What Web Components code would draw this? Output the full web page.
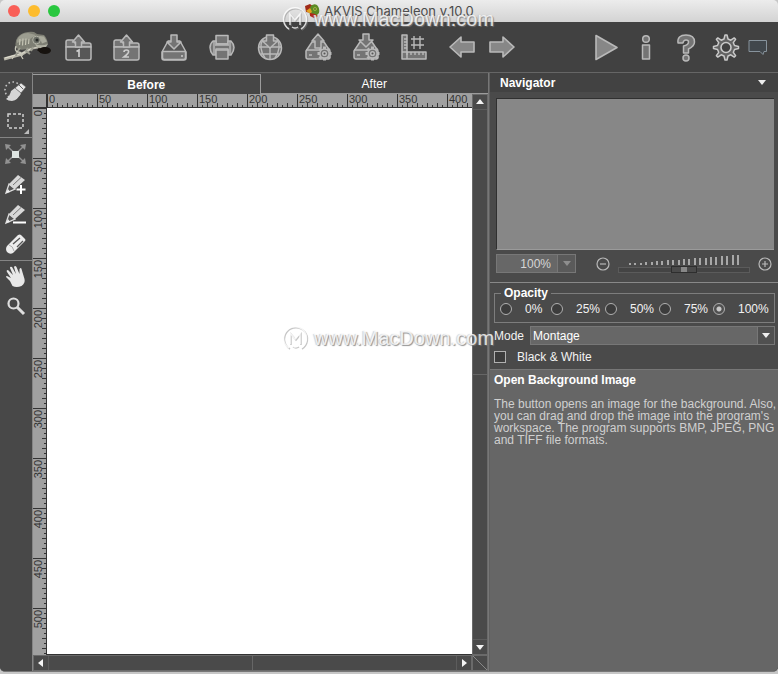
<!DOCTYPE html>
<html lang="en">
<head>
<meta charset="utf-8">
<title>AKVIS Chameleon v.10.0</title>
<style>
html,body{margin:0;height:100%}
body{background:#c6c6c6;font:12px/14px "Liberation Sans",Arial,sans-serif;color:#f2f2f2}
</style>
</head>
<body>
<chameleon-app></chameleon-app>
<script>
const ICONS={
open1:`<path class="m" d="M2 14V9q0-2 2-2h5l2 3h14q2 0 2 2v2z"/><path class="d" d="M2 14h25v11q0 2-2 2H4q-2 0-2-2z"/><path class="m" d="M14.500 2l6 7h-3v5h-6V9h-3z"/><path class="w" d="M12.500 18.500l2.500-1.500v7"/>`,
open2:`<path class="m" d="M2 14V9q0-2 2-2h5l2 3h14q2 0 2 2v2z"/><path class="m" d="M2 14h25v11q0 2-2 2H4q-2 0-2-2z"/><path class="m" d="M14.500 2l6 7h-3v5h-6V9h-3z"/><path class="w" d="M12 19q0-2 2.500-2t2 2q0 1.500-4.500 5h5"/>`,
save:`<path class="d" d="M8 8L2 19v6q0 2 2 2h20q2 0 2-2v-6L20 8z"/><path class="m" d="M2.500 18.500h23v6q0 2-2 2h-19q-2 0-2-2z"/><path class="m" d="M11 2h6v7h4l-7 7-7-7h4z"/><path class="w" d="M21 23h2"/>`,
print:`<path class="m" d="M8 2.500h12V11H8z"/><path class="m" d="M5 8h3v3h12V8h3q3 3 3 6.500T23 22h-3v-6H8v6H5q-3-3.500-3-7.500T5 8z"/><path class="m" d="M8 17h12v9H8z"/><path class="l" d="M6 8v14M22 8v14M7 12h14"/>`,
web:`<circle class="m" cx="14" cy="15" r="11.500"/><path class="l" d="M14 4v22M3 14h22M5 21h18M7 6q-5 9 2 19M21 6q5 9-2 19"/><path class="m" d="M10.500 2h7v6h4L14 15 6.500 8h4z"/>`,
load:`<path class="m" d="M8 9L2 18v6q0 2 2 2h20q2 0 2-2v-6L20 9z"/><path class="l" d="M2 17h24M5 22h3"/><path class="m" d="M11 15V8H8l6-7 6 7h-3v7z"/>`,
store:`<path class="m" d="M8 9L2 18v6q0 2 2 2h20q2 0 2-2v-6L20 9z"/><path class="l" d="M2 17h24M5 22h3"/><path class="m" d="M11 1h6v6h4l-7 7-7-7h4z"/>`,
cog:`<g transform="translate(20.500 20.500)"><path class="s" d="M-1.500-7h3v14h-3zM-7-1.500H7v3H-7zM-6-4L-4-6 6 4 4 6zM-6 4L4-6 6-4-4 6z"/><circle class="m" r="4.600"/><circle class="d" r="1.800"/></g>`,
ruler:`<path class="m" d="M2 2h5v24H2zM2 19h24v7H2z"/><path class="l" d="M4 6h3M4 9h3M4 12h3M4 15h3M7 19v3M11 19v3M15 19v3M19 19v3M23 19v3M14 3v13M20 3v13M11 6h13M11 12h13"/>`,
prev:`<path class="f" d="M2 14L13 4v5h13v10H13v5z"/>`,
next:`<path class="f" d="M26 14L15 4v5H2v10h13v5z"/>`,
play:`<path class="f" d="M4 2.500L25 14.500 4 26.500z"/>`,
info:`<circle class="m" cx="14" cy="6" r="3.300"/><path class="m" d="M10.500 12h7v14h-7z"/>`,
help:`<path class="m" d="M6 10q-1-8 8-8 8.500 0 8.500 7 0 4-6 7v4h-5v-7q5-1 5-4 0-2-2.500-2T11 10z"/><circle class="m" cx="14" cy="25" r="3"/>`,
gear:`<g transform="translate(14 14.500)"><path class="g" d="M-2-8.500L-1-12.500H1L2-8.500 4.800-7.300 8.200-9.600 9.600-8.200 7.300-4.800 8.500-2 12.500-1V1L8.500 2 7.300 4.800 9.600 8.200 8.200 9.600 4.800 7.300 2 8.500 1 12.500H-1L-2 8.500-4.800 7.300-8.200 9.600-9.600 8.200-7.300 4.800-8.500 2-12.500 1V-1L-8.500-2-7.300-4.800-9.600-8.200-8.200-9.600-4.800-7.300z"/><circle r="5" class="h"/></g>`,
chat:`<path d="M5 7.500h17.500v11H20l-1 3-3-3H5z" fill="#41474c" stroke="#87939c"/>`,
history:`<circle cx="12" cy="13" r="8" fill="none" stroke="#c4c4c4" stroke-width="1.600" stroke-dasharray="1.600 2.500"/><path d="M5 22q4-3 5-8l4-3 6 5q-3 7-9 8-4 0-6-2z" fill="#d6d6d6"/><path d="M14 11l6-5 5 4-5 6z" fill="#e6e6e6" stroke="#555" stroke-width=".6"/><path d="M18 8l4 4" stroke="#666"/>`,
marquee:`<path d="M7 7h15v14H7z" fill="none" stroke="#d0d0d0" stroke-width="1.500" stroke-dasharray="3 2"/>`,
transform:`<path d="M6 6l17 16M23 6L6 22" stroke="#909090" stroke-width="1.500"/><path d="M4 4l6 1-5 5zM25 4l-6 1 5 5zM4 24l6-1-5-5zM25 24l-6-1 5-5z" fill="#929292"/><path d="M11 11h7v7h-7z" fill="#dfe5e2"/>`,
pencil:`<path d="M5 23l3-9 6 5z" fill="#555" stroke="#ddd" stroke-width="1.300"/><path d="M8 14l9-9 7 5-10 9z" fill="#d8d8d8"/><path d="M12 15l8-7.500" stroke="#777"/><path d="M5 23l2-4 2 3z" fill="#eee"/>`,
plus:`<path d="M20 15v9M15.500 19.500h9" stroke="#fff" stroke-width="2"/>`,
minus:`<path d="M12 22.500h13" stroke="#fff" stroke-width="2"/>`,
eraser:`<path d="M6 16L17 5q2-1 3 0l4 4q1 1 0 2L12 23q-3 2-6-1-2-3 0-6z" fill="#ececec"/><path d="M12 14l7-6M16 17l6-6" stroke="#555" stroke-width="1.300"/><path d="M8 15q4 1 5 6" stroke="#aaa" fill="none"/>`,
hand:`<g transform="translate(0 -1)"><path d="M11 24q-1-4-5-7-2-2 0-2l4 2-4-6q-1-2 1-2l5 5-3-7q0-2 2-1l4 7-2-7q1-2 2.500 0l3 7 0-5q1.500-2 2 0l3 10q1 4-3 7-5 2-9 0z" fill="#e8e8e8"/></g>`,
zoom:`<circle cx="12.500" cy="11.500" r="5" fill="none" stroke="#dedede" stroke-width="2.200"/><path d="M16 15l7 7" stroke="#dedede" stroke-width="3"/>`
};
const define=(name,markup,setup)=>{
  const t=document.createElement('template');
  t.innerHTML=markup;
  customElements.define(name,class extends HTMLElement{
    constructor(){super();this.attachShadow({mode:'open'}).append(t.content.cloneNode(true))}
    connectedCallback(){if(setup&&!this.ready){this.ready=true;setup(this,this.shadowRoot)}}
  });
};

define('line-icon',`<style>
:host{display:block;width:28px;height:28px}
svg{display:block;width:28px;height:28px;overflow:visible}
.m{fill:#747474;stroke:#b9b9b9;stroke-width:1.500;stroke-linejoin:round}
.f{fill:#878787;stroke:#b9b9b9;stroke-width:1.600;stroke-linejoin:round}
.d{fill:#575757;stroke:#b9b9b9;stroke-width:1.500;stroke-linejoin:round}
.l{fill:none;stroke:#b9b9b9;stroke-width:1.400}
.w{fill:none;stroke:#ccc;stroke-width:1.700}
.s{fill:#b9b9b9}
.g{fill:#636363;stroke:#c9c9c9;stroke-width:1.500;stroke-linejoin:round}
.h{fill:#414141;stroke:#c9c9c9;stroke-width:1.600}
</style><svg viewBox="0 0 28 28" aria-hidden="true"></svg>`,(el,r)=>{
  r.querySelector('svg').innerHTML=el.getAttribute('name').split(' ').map(n=>ICONS[n]).join('');
});

define('tool-button',`<style>
:host{display:block;width:48px}
button{display:flex;align-items:center;justify-content:center;width:100%;height:100%;padding:0;border:0;background:none}
</style><button type="button"></button>`,(el,r)=>{
  const b=r.querySelector('button'),n=document.createElement('line-icon');
  n.setAttribute('name',el.getAttribute('icon'));
  b.setAttribute('aria-label',el.getAttribute('label'));
  b.append(n);
});

define('title-bar',`<style>
:host{display:flex;align-items:center;height:22px;background:linear-gradient(#ececec,#d3d3d3);color:#4b4b4b;font:13px/16px Inter,"Liberation Sans",sans-serif}
.side{flex:1;display:flex;gap:8px;padding:0 8px}
button{width:12px;height:12px;padding:0;border:0;border-radius:50%}
.c{background:#f95f57}.n{background:#fdbc2e}.z{background:#29c73f}
.name{display:flex;align-items:center;gap:4px}
svg{width:16px;height:16px}
</style>
<div class="side"><button class="c" aria-label="Close"></button><button class="n" aria-label="Minimize"></button><button class="z" aria-label="Zoom"></button></div>
<div class="name"><svg viewBox="0 0 16 16" aria-hidden="true"><path d="M1 3l5-2 4 3-3 6-5-1z" fill="#a02a18"/><path d="M2 8l4-3 3 2-2 4z" fill="#e2a31e"/><path d="M6 4q3-4 7-2 3 3 2 8l-4 4-6-3 3-2z" fill="#5c8a24"/><path d="M6 10l5 1 3 2-4 2-4-2z" fill="#b3261c"/><circle cx="11" cy="6" r="1.800" fill="#b8d04a"/><circle cx="11" cy="6" r=".8" fill="#222"/></svg><span>AKVIS Chameleon v.10.0</span></div><div class="side"></div>`);

define('chameleon-logo',`<style>:host{display:block;width:50px;height:36px}svg{display:block;width:50px;height:36px}</style>
<svg viewBox="0 0 50 36" role="img" aria-label="Chameleon">
<path d="M2 30l18-5 10-6 11-2" fill="none" stroke="#b9b7aa" stroke-width="3"/><path d="M3 29l18-5 9-5 9-2" fill="none" stroke="#e1dfd2"/>
<path d="M14 19q-2-9 4-13 6-4 14-3l3 2 7 1q3 3 4 9-5 4-12 3l-9 2q-7 2-11-1z" fill="#7e7f74"/>
<path d="M15 11q3-7 11-7l8 2-6 4q-7 1-13 4z" fill="#9c9d90"/>
<path d="M18 10l-.5 6M21 9.500l-.5 7M24 9.500l-.5 6.500M27 10l-.5 5" stroke="#c4c4b4" stroke-width="1.200"/>
<path d="M33 15q6 2.500 13 0l-2 3-9 .5z" fill="#b0b1a3"/><path d="M37 7l5 .5 3 5-5 2z" fill="#a9aa9c"/>
<circle cx="34.500" cy="11" r="3.800" fill="#6b6e66" stroke="#b2b3a6"/><circle cx="35" cy="11" r="1.500" fill="#282b28"/>
<path d="M18 19l-3 4-1 4M26 19l-2 3 4 3M31 18l-2 4" fill="none" stroke="#9b9c90" stroke-width="2"/>
<path d="M14 17q-2 5 2 6 4 0 4 4" fill="none" stroke="#c9c8bb" stroke-width="1.300"/>
<path d="M12 27l-2 3M18 25l3 5" stroke="#c9c7b8" stroke-width="1.300"/>
<ellipse cx="43" cy="21.500" rx="6" ry="3.500" fill="#17130f"/><path d="M36 20l4 3" stroke="#17130f" stroke-width="3"/></svg>`);

define('main-toolbar',`<style>
:host{display:flex;align-items:stretch;height:50px;padding:0 8px 0 2px;background:#414141;border-bottom:1px solid #666}
chameleon-logo{align-self:center;margin-right:2px}
.nav{margin-left:4px;display:flex}
.right{margin-left:auto;display:flex}
.nav tool-button,.right tool-button{width:40px}
.right tool-button:last-child{width:24px}
</style><chameleon-logo></chameleon-logo>
<tool-button icon="open1" label="Open Background Image"></tool-button><tool-button icon="open2" label="Open Foreground Image"></tool-button><tool-button icon="save" label="Save Image"></tool-button><tool-button icon="print" label="Print"></tool-button><tool-button icon="web" label="Publish"></tool-button><tool-button icon="load cog" label="Load Strokes"></tool-button><tool-button icon="store cog" label="Save Strokes"></tool-button><tool-button icon="ruler" label="Rulers and Grid"></tool-button>
<div class="nav"><tool-button icon="prev" label="Undo"></tool-button><tool-button icon="next" label="Redo"></tool-button></div>
<div class="right"><tool-button icon="play" label="Run"></tool-button><tool-button icon="info" label="About"></tool-button><tool-button icon="help" label="Help"></tool-button><tool-button icon="gear" label="Preferences"></tool-button><tool-button icon="chat" label="Notifications"></tool-button></div>`);

define('tool-palette',`<style>
:host{display:block;width:32px;background:#484848;border-right:1px solid #858585;box-sizing:content-box}
.group{display:flex;flex-direction:column;border-bottom:1px solid #858585;padding:1px 0}
.group:last-of-type{border:0;padding:0}
tool-button{width:30px;height:30px}
.group:first-of-type{padding:3px 0 1px;position:relative}
.corner{position:absolute;right:3px;bottom:3px;width:5px;height:5px;fill:#bbb}
</style>
<div class="group"><tool-button icon="history" label="History Brush"></tool-button><tool-button icon="marquee" label="Selection"></tool-button><svg class="corner" viewBox="0 0 5 5" aria-hidden="true"><path d="M5 0v5H0z"/></svg></div>
<div class="group"><tool-button icon="transform" label="Transform"></tool-button><tool-button icon="pencil plus" label="Keep Pencil"></tool-button><tool-button icon="pencil minus" label="Drop Pencil"></tool-button><tool-button icon="eraser" label="Eraser"></tool-button></div>
<div class="group"><tool-button icon="hand" label="Hand"></tool-button><tool-button icon="zoom" label="Zoom"></tool-button></div>`);

define('scale-ruler',`<style>
:host{display:block;overflow:hidden;background:#a0a0a0;min-width:0;min-height:0;position:relative}
svg{position:absolute;left:0;top:0;width:100%;height:100%}
text{font:11px "Liberation Sans",Arial,sans-serif;fill:#333}
path{stroke:#333;fill:none}
</style><svg aria-hidden="true"></svg>`,(el,r)=>{
  const v=el.hasAttribute('vertical'),max=+el.getAttribute('max');
  let d='',t='';
  for(let i=0;i<3000;i+=5){
    const n=i%50===0?0:i%10===0?9:11,p=i+.5;
    d+=v?`M${n} ${p}H14`:`M${p} ${n}V14`;
  }
  for(let i=0;i<=max;i+=50)t+=v?`<text text-anchor="end" transform="translate(9 ${i+2}) rotate(-90)">${i}</text>`:`<text x="${i+2}" y="9">${i}</text>`;
  r.querySelector('svg').innerHTML=`<path d="${d}${v?'M13.500 0V3000':'M0 13.500H3000'}"/>${t}`;
});

define('scroll-bar',`<style>
:host{display:flex;background:#4a4a4a;border:1px solid #6a6a6a;box-sizing:border-box;min-width:0;min-height:0}
:host([vertical]){flex-direction:column}
button{flex:none;width:14px;height:14px;padding:0;border:0;background:none;display:grid;place-items:center}
svg{width:8px;height:8px;fill:#f4f4f4}
:host([vertical]) svg{transform:rotate(90deg)}
.track{flex:1;display:flex;border:solid #5c5c5c;border-width:0 1px}
:host([vertical]) .track{flex-direction:column;border-width:1px 0}
.thumb{flex:0 0 50%;box-sizing:border-box;border:solid #666;border-width:0 1px 0 0}
:host([vertical]) .thumb{border-width:0 0 1px}
</style><button aria-label="Back"><svg viewBox="0 0 8 8"><path d="M6 0L1 4l5 4z"/></svg></button><div class="track"><div class="thumb"></div></div><button aria-label="Forward"><svg viewBox="0 0 8 8"><path d="M2 0l5 4-5 4z"/></svg></button>`);

define('image-workspace',`<style>
:host{display:flex;flex-direction:column;min-width:0;background:#4a4a4a;border-right:1px solid #777;padding-top:1px}
.tabs{display:grid;grid-template-columns:1fr 1fr;height:20px}
.tabs button{border:0;padding:0;background:#464646;color:#fff;font:bold 12px/14px "Liberation Sans",Arial,sans-serif}
.tabs button:first-child{border:solid #9c9c9c;border-width:1px 1px 0 0}
.tabs button:last-child{border-bottom:1px solid #9c9c9c;font-weight:normal}
.view{flex:1;min-height:0;display:grid;grid-template:14px minmax(0,1fr) 16px/14px minmax(0,1fr) 16px}
.corner{background:#a0a0a0;border:solid #333;border-width:0 1px 1px 0}
.canvas{background:#fff;border-bottom:1px solid #333}
.v{grid-area:1/3/3/4}.h{grid-area:3/1/4/3}
.grip{background:linear-gradient(to top right,transparent 47%,#888 47% 53%,transparent 53%);border:1px solid #6a6a6a}
</style>
<div class="tabs" role="tablist"><button role="tab" aria-selected="true">Before</button><button role="tab">After</button></div>
<div class="view"><div class="corner"></div><scale-ruler max="400"></scale-ruler><scroll-bar class="v" vertical></scroll-bar><scale-ruler vertical max="500"></scale-ruler><div class="canvas"></div><scroll-bar class="h"></scroll-bar><div class="grip"></div></div>`);

define('navigator-panel',`<style>
:host{display:block;border-bottom:1px solid #888}
header{display:flex;align-items:center;justify-content:space-between;height:19px;padding:0 11px 0 10px;background:#424242;font-weight:bold;color:#fff}
header button{width:10px;height:10px;padding:0;border:0;background:none;display:grid;place-items:center}
header svg{width:8px;height:5px;fill:#eee}
.preview{height:150px;margin:6px 4px 0 6px;background:#878787;border:1px solid #303030;border-width:1px 0 0 1px;border-bottom:1px solid #9a9a9a}
.row{display:flex;align-items:center;padding:4px 6px 9px}
.pick{position:relative;display:block}
.pick svg,.pick i{position:absolute;pointer-events:none}
.pick i{right:0;top:0;bottom:0;width:17px;border:1px solid #777;display:grid;place-items:center;background:#5a5a5a}
.pick svg{width:8px;height:5px;fill:#8e8e8e}
select{appearance:none;display:block;width:80px;height:19px;padding:0 24px 0 0;border:1px solid #777;border-radius:0;background:#676767;color:#d6d6d6;font:12px/16px "Liberation Sans",Arial,sans-serif;text-align-last:right}
.zoom{width:14px;height:14px;padding:0;border:0;background:none}
.zoom svg{display:block;width:14px;height:14px;fill:none;stroke:#b8b8b8;stroke-width:1.200}
.out{margin-left:20px;margin-right:8px}.in{margin-left:auto}
.slide{flex:0 0 132px}
.slide svg{display:block;width:132px;height:11px}
input{appearance:none;display:block;width:100%;height:6px;margin:1px 0 0;background:#444;border:1px solid #5b5b5b;box-sizing:border-box}
input::-webkit-slider-thumb{appearance:none;width:26px;height:7px;border:1px solid #2e2e2e;background:linear-gradient(90deg,#4a4a4a 9px,#888 9px 15px,#4a4a4a 15px)}
</style>
<header>Navigator<button aria-label="Panel menu"><svg viewBox="0 0 8 5"><path d="M0 0h8L4 5z"/></svg></button></header>
<div class="preview"></div>
<div class="row"><label class="pick"><select aria-label="Zoom"><option>100%</option></select><i><svg viewBox="0 0 8 5"><path d="M0 0h8L4 5z"/></svg></i></label>
<button class="zoom out" aria-label="Zoom out"><svg viewBox="0 0 14 14"><circle cx="7" cy="7" r="6"/><path d="M4 7h6"/></svg></button>
<div class="slide"><svg class="ticks" viewBox="0 0 132 11" aria-hidden="true"><path fill="none" stroke="#a8a8a8" stroke-width="2"/></svg><input type="range" value="50" aria-label="Zoom level"></div>
<button class="zoom in" aria-label="Zoom in"><svg viewBox="0 0 14 14"><circle cx="7" cy="7" r="6"/><path d="M4 7h6M7 4v6"/></svg></button></div>`,(el,r)=>{
  let d='';for(let i=0;i<21;i++)d+=`M${Math.round(12+i*5.4)} 10V${Math.round(8-Math.max(0,i-1)*.42)}`;
  r.querySelector('.ticks path').setAttribute('d',d);
});

define('settings-panel',`<style>
:host{display:block;padding:2px 3px 5px 4px;font-size:12px}
fieldset{display:grid;grid-template-columns:51fr 54fr 54fr 54fr 60fr;margin:0;padding:0 1px 5px 5px;border:1px solid #7d7d7d;min-width:0}
legend{padding:0 3px;margin-left:1px;font-weight:bold;color:#fff;line-height:16px}
fieldset label{display:flex;align-items:center;gap:13px;line-height:16px}
input{appearance:none;flex:none;margin:0;box-sizing:border-box;width:12px;height:12px;border:1px solid #b0b0b0;background:#3c3c3c}
input[type=radio]{border-radius:50%}
input[type=radio]:checked{background:radial-gradient(#c8c8c8 0 2px,#505050 3px)}
.mode{display:flex;align-items:center;gap:6px;margin-top:3px;height:19px}
.pick{position:relative;flex:1}
select{appearance:none;display:block;width:100%;height:19px;padding:0 20px 0 2px;border:1px solid #777;border-radius:0;background:#676767;color:#fff;font:12px/14px "Liberation Sans",Arial,sans-serif}
.pick i{position:absolute;right:0;top:0;bottom:0;width:16px;border:1px solid #777;display:grid;place-items:center;background:#505050;pointer-events:none}
.pick svg{width:8px;height:5px;fill:#eee}
.check{display:flex;align-items:center;gap:11px;margin-top:5px;line-height:14px}
</style>
<fieldset><legend>Opacity</legend><label><input type="radio" name="o">0%</label><label><input type="radio" name="o">25%</label><label><input type="radio" name="o">50%</label><label><input type="radio" name="o">75%</label><label><input type="radio" name="o" checked>100%</label></fieldset>
<div class="mode"><label for="mode">Mode</label><div class="pick"><select id="mode"><option>Montage</option></select><i><svg viewBox="0 0 8 5"><path d="M0 0h8L4 5z"/></svg></i></div></div>
<label class="check"><input type="checkbox">Black &amp; White</label>`);

define('hint-panel',`<style>
:host{display:block;flex:1;background:#666;border-top:1px solid #777;padding:2px 0 0 4px;color:#d0d0d0;line-height:12px}
h2{margin:0 0 10px;font:bold 12px/16px "Liberation Sans",Arial,sans-serif;color:#fff}
p{margin:0}
</style><h2><slot name="title"></slot></h2><p><slot></slot></p>`);

define('water-mark',`<style>
:host{position:absolute;display:flex;align-items:center;gap:6px;pointer-events:none;color:#fffc;font:20px/24px "Liberation Sans",Arial,sans-serif;text-shadow:1px 1px 1px #777c,-1px 0 1px #aaa8}
svg{width:26px;height:26px;fill:none;stroke:#fffc;stroke-width:1.500;filter:drop-shadow(1px 1px 0 #8889)}
</style><svg viewBox="0 0 26 26" aria-hidden="true"><path d="M7 23A11.500 11.500 0 1 1 19 23"/><path d="M8 19V8l5 6 5-6v11M10 21q3 2 6 0"/></svg><span>www.MacDown.com</span>`);

define('chameleon-app',`<style>
:host{display:flex;flex-direction:column;height:100vh;box-sizing:border-box;padding-bottom:2px;position:relative;overflow:hidden}
title-bar{border-radius:5px 5px 0 0}
.body{flex:1;min-height:0;display:grid;grid-template-columns:auto minmax(0,1fr) 289px;border-radius:0 0 5px 5px;overflow:hidden;border-bottom:1px solid #777;background:#484848}
aside{display:flex;flex-direction:column;min-width:0;background:#4a4a4a;border-left:1px solid #606060}
water-mark{left:282px;top:6px}
water-mark:last-child{top:325px}
</style>
<title-bar></title-bar><main-toolbar></main-toolbar>
<div class="body"><tool-palette></tool-palette><image-workspace></image-workspace>
<aside><navigator-panel></navigator-panel><settings-panel></settings-panel><hint-panel><span slot="title">Open Background Image</span>The button opens an image for the background. Also, you can drag and drop the image into the program's workspace. The program supports BMP, JPEG, PNG and TIFF file formats.</hint-panel></aside></div>
<water-mark></water-mark><water-mark></water-mark>`);
</script>
</body>
</html>
